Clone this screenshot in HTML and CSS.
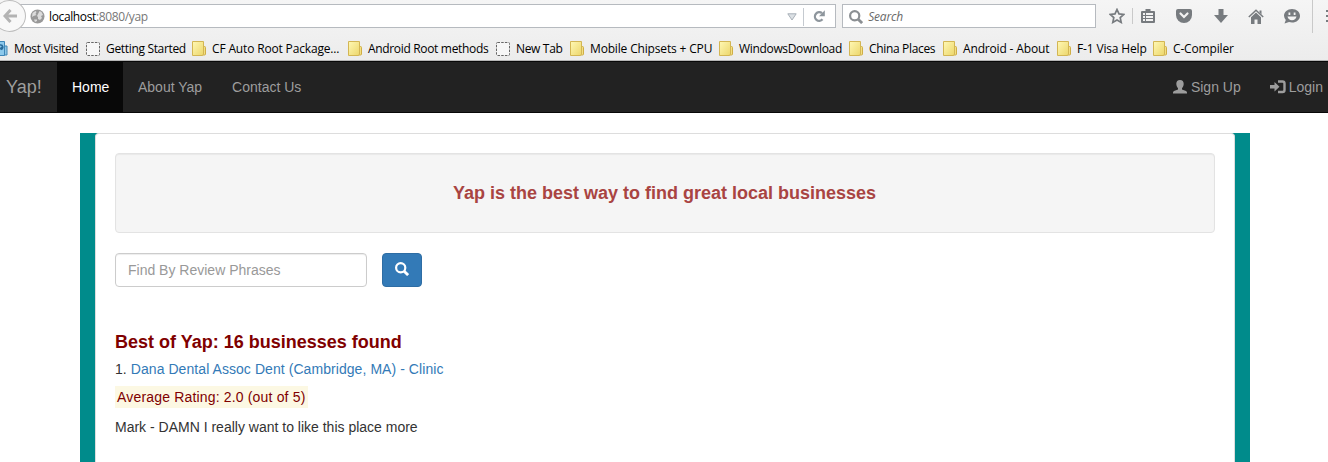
FILE: index.html
```html
<!DOCTYPE html>
<html lang="en">
<head>
<meta charset="utf-8">
<title>Yap</title>
<link rel="stylesheet" href="styles.css">
</head>
<body>
<svg class="defs" width="0" height="0">
  <defs>
    <linearGradient id="fill" x1="0" y1="0" x2="1" y2="1"><stop offset="0" stop-color="#fff8b4"/><stop offset="1" stop-color="#ecd66b"/></linearGradient>
    <symbol id="folder" viewBox="0 0 14 16"><path d="M9 5.500h3.500q1 0 1 1v6.500q0 1-1 1H9z" fill="#f3df83" stroke="#cfae45"/><path d="M.5.500h11v12.500l-1 1.500H.5z" fill="url(#fill)" stroke="#d3b654"/></symbol>
    <symbol id="blank" viewBox="0 0 14 16"><rect x=".5" y="1.500" width="13" height="13" rx="1" fill="#f7f7f7" stroke="#666" stroke-dasharray="2.500 1.200"/></symbol>
    <symbol id="glass" viewBox="0 0 14 14"><circle cx="5.700" cy="5.700" r="4.600" fill="none" stroke="currentColor" stroke-width="2.200"/><path d="M8.900 8.900l4.200 4.200" stroke="currentColor" stroke-width="2.800"/></symbol>
  </defs>
</svg>
<div class="chrome">
  <div class="toolbar">
    <div class="back"><svg width="14" height="14" viewBox="0 0 14 14"><path d="M7.500 1L2 7l5.500 6M2 7h12" fill="none" stroke="#b3b3b3" stroke-width="3"/></svg></div>
    <div class="address">
      <svg class="globe" width="15" height="15" viewBox="0 0 15 15"><circle cx="7.500" cy="7.500" r="7" fill="#999"/><path d="M2.500 4l3-2 1 1-1 2 1 1-3 1-1.500 1zM9.500 2l2 1 1.500 3-2 1 1 2-2 2-2-1 0-2-1-1 1.500-3zM4 10.500h3l0 1.500-2 1z" fill="#dcdcdc"/></svg>
      <span class="url"><b>localhost</b>:8080/yap</span>
      <svg class="drop" width="10" height="8" viewBox="0 0 10 8"><path d="M.8.800h8.400L5 7z" fill="#dce1e5" stroke="#a8b0b8"/></svg>
      <div class="reload"><svg width="13" height="13" viewBox="0 0 13 13"><path d="M9.500 9.300A4.300 4.300 0 1 1 9 3.200" fill="none" stroke="#8e969d" stroke-width="2.300"/><path d="M11.800.300v6H6z" fill="#8e969d"/></svg></div>
    </div>
    <div class="finder"><svg width="14" height="14"><use href="#glass"/></svg><i>Search</i></div>
    <div class="tools">
      <svg width="16" height="16" viewBox="0 0 16 16"><path d="M8 1.500l2 4.400 4.800.500-3.600 3.200 1 4.800L8 12l-4.200 2.400 1-4.800L1.200 6.400 6 5.900z" fill="none" stroke="#777b7f" stroke-width="1.700"/></svg>
      <i class="rule short"></i>
      <svg class="clip" width="14" height="14" viewBox="0 0 14 14"><path d="M4.500 2V0h5v2H13q1 0 1 1v10q0 1-1 1H1q-1 0-1-1V3q0-1 1-1z" fill="#777b7f"/><path d="M2 4h2v2H2zM5 4h7v2H5zM2 7h2v2H2zM5 7h7v2H5zM2 10h2v2H2zM5 10h7v2H5z" fill="#f3f3f3"/></svg>
      <svg class="pocket" width="16" height="14" viewBox="0 0 16 14"><path d="M2 0h12q2 0 2 2v4a8 8 0 0 1-16 0V2q0-2 2-2z" fill="#777b7f"/><path d="M4.500 4.500L8 8l3.500-3.500" fill="none" stroke="#f3f3f3" stroke-width="2.200" stroke-linecap="round"/></svg>
      <svg class="down" width="14" height="14" viewBox="0 0 14 14"><path d="M4.500 0h5v6H14l-7 8-7-8h4.500z" fill="#777b7f"/></svg>
      <svg class="home" width="16" height="15" viewBox="0 0 16 15"><path d="M.8 8L8 1.200 15.200 8" fill="none" stroke="#777b7f" stroke-width="1.500"/><path d="M11.500 1.500h2v4l-2-2zM3 8.200l5-4.700 5 4.700V15H9.500v-4.500h-3V15H3z" fill="#777b7f"/></svg>
      <svg class="chat" width="16" height="15" viewBox="0 0 16 15"><path d="M8 0c4.600 0 8 3 8 6.800s-3.400 6.800-8 6.800c-1 0-2-.200-3-.500L.500 14.500l1.300-3.600A6.500 6.500 0 0 1 0 6.800C0 3 3.400 0 8 0z" fill="#777b7f"/><path d="M4.500 3.500h1.800v2.500H4.500zM9.700 3.500h1.800v2.500H9.700zM3.500 7.500h9q-1 3.800-4.500 3.800T3.500 7.500z" fill="#f3f3f3"/></svg>
      <i class="rule tall"></i>
      <svg class="menu" width="2" height="14" viewBox="0 0 2 14"><path d="M0 1h2v2H0zM0 6h2v2H0zM0 11h2v2H0z" fill="#777b7f"/></svg>
    </div>
  </div>
  <div class="bookmarks">
    <span class="visited"><svg width="15" height="16" viewBox="0 0 15 16"><path d="M10 5h4v9h-4z" fill="#8ec6e6" stroke="#4388b5"/><path d="M.5.500h11v14H.5z" fill="#8cc9ec" stroke="#3e86b8"/><path d="M4 11l5-5M7 4a2.300 2.300 0 1 1 1 4.500" fill="none" stroke="#286b9b" stroke-width="1.500"/></svg>Most Visited</span>
    <span><svg><use href="#blank"/></svg>Getting Started</span>
    <span class="loose"><svg><use href="#folder"/></svg>CF Auto Root Package...</span>
    <span><svg><use href="#folder"/></svg>Android Root methods</span>
    <span><svg><use href="#blank"/></svg>New Tab</span>
    <span class="loose"><svg><use href="#folder"/></svg>Mobile Chipsets + CPU</span>
    <span><svg><use href="#folder"/></svg>WindowsDownload</span>
    <span><svg><use href="#folder"/></svg>China Places</span>
    <span class="loose"><svg><use href="#folder"/></svg>Android - About</span>
    <span class="loose"><svg><use href="#folder"/></svg>F-1 Visa Help</span>
    <span class="loose"><svg><use href="#folder"/></svg>C-Compiler</span>
  </div>
</div>
<nav class="navbar">
  <a class="brand">Yap!</a>
  <a class="active">Home</a>
  <a>About Yap</a>
  <a>Contact Us</a>
  <a class="signup"><svg width="14" height="14" viewBox="0 0 14 14"><path d="M7 0c2.500 0 3.700 1.500 3.700 3.800 0 1.800-.700 3.500-1.700 4.400v1.300l4 1.400Q14 11.500 14 12.500V13.500H0v-1q0-1 1-1.600l4-1.400V8.200C4 7.300 3.300 5.600 3.300 3.800 3.300 1.500 4.500 0 7 0z" fill="#9d9d9d"/></svg>Sign Up</a>
  <a class="login"><svg width="16" height="14" viewBox="0 0 16 14"><path d="M0 5h4.500V2l5 4.800-5 4.800V8.500H0z" fill="#9d9d9d"/><path d="M8 1.500h4.500q2 0 2 2v6.500q0 2-2 2H8" fill="none" stroke="#9d9d9d" stroke-width="2.400"/></svg>Login</a>
</nav>
<main class="container">
  <div class="panel">
    <div class="well">Yap is the best way to find great local businesses</div>
    <form class="search">
      <input type="text" placeholder="Find By Review Phrases">
      <button type="button"><svg width="14" height="14"><use href="#glass"/></svg></button>
    </form>
    <h4>Best of Yap: 16 businesses found</h4>
    <p class="entry">1. <a>Dana Dental Assoc Dent (Cambridge, MA) - Clinic</a></p>
    <p class="rating"><mark>Average Rating: 2.0 (out of 5)</mark></p>
    <p class="review">Mark - DAMN I really want to like this place more</p>
  </div>
</main>
</body>
</html>
```
FILE: styles.css
```css
* { box-sizing: border-box; }
html, body { height: 100%; }
body { margin: 0; overflow: hidden; background: #fff; color: #333; font: 14px/20px "Liberation Sans", Arial, sans-serif; display: flex; flex-direction: column; }
svg { display: block; flex: none; }
.defs { position: absolute; }
.chrome { height: 61px; flex: none; background: linear-gradient(#f5f5f5, #ececec); border-bottom: 1px solid #b5b5b5; font: 12px/16px "Open Sans", "Noto Sans", sans-serif; color: #000; overflow: hidden; }
.toolbar { height: 35px; display: flex; align-items: flex-start; padding-top: 4px; }
.back { z-index: 1; width: 33px; height: 32px; margin: -4px -26px 0 -7px; border: 1px solid #bdbdbd; border-radius: 50%; background: #f8f8f8; display: flex; align-items: center; justify-content: center; padding-left: 2px; }
.address { width: 837px; height: 24px; border: 1px solid #b6babf; background: #fff; display: flex; align-items: center; padding: 1px 0 0 29px; }
.url { margin-left: 4px; color: #777; letter-spacing: -.36px; }
.url b { font-weight: 400; color: #000; }
.drop { margin-left: auto; margin-right: 6px; }
.reload { width: 32px; height: 18px; border-left: 1px solid #c5cad0; display: flex; align-items: center; justify-content: center; }
.finder { width: 254px; height: 24px; margin-left: 6px; border: 1px solid #b6babf; background: #fff; display: flex; align-items: center; gap: 5px; padding: 1px 0 0 6px; color: #8b8f93; }
.finder i { color: #6a6a6a; letter-spacing: -.2px; }
.tools { display: flex; align-items: center; height: 24px; margin-left: 13px; }
.rule { background: #c9c9c9; width: 1px; flex: none; }
.short { height: 16px; margin-left: 7px; }
.tall { height: 33px; margin-left: 12px; }
.clip { margin-left: 8px; }
.pocket { margin-left: 21px; }
.down { margin-left: 22px; }
.home { margin-left: 20px; }
.chat { margin-left: 20px; }
.menu { margin-left: 13px; }
.bookmarks { display: grid; grid-template-columns: 93px 106px 156px 148px 74px 149px 130px 94px 114px 96px 100px; margin-left: -7px; padding-top: 5px; white-space: nowrap; letter-spacing: -.33px; }
.bookmarks span { display: flex; align-items: center; line-height: 17px; }
.bookmarks svg { width: 14px; height: 16px; margin-right: 6px; }
.bookmarks .visited svg { width: 15px; }
.bookmarks .loose { letter-spacing: -.16px; }
.navbar { height: 52px; flex: none; background: #222; border: solid #080808; border-width: 1px 0; display: flex; color: #9d9d9d; }
.navbar a { display: flex; align-items: center; padding: 0 15px; }
.navbar .brand { font-size: 18px; width: 57px; padding: 0 0 0 6px; }
.navbar .active { width: 66px; background: #080808; color: #fff; }
.navbar .signup { margin-left: auto; }
.signup svg { margin-right: 4px; }
.navbar .login { padding-right: 5px; padding-left: 14px; }
.login svg { margin-right: 3px; }
.container { width: 1170px; flex: 1 1 0; min-height: 0; margin: 20px 0 0 80px; padding: 0 15px; background: #008b8b; }
.panel { height: 100%; background: #fff; border: 1px solid #ddd; border-bottom: 0; border-radius: 4px 4px 0 0; padding: 19px 19px 0; }
.well { height: 80px; display: flex; align-items: center; justify-content: center; padding-right: 1px; background: #f5f5f5; border: 1px solid #e3e3e3; border-radius: 4px; box-shadow: inset 0 1px 1px rgba(0,0,0,.05); color: #a94442; font-size: 18px; font-weight: 700; }
.search { display: flex; gap: 15px; margin: 20px 0 45px; }
.search input { width: 252px; height: 34px; padding: 6px 12px; border: 1px solid #ccc; border-radius: 4px; box-shadow: inset 0 1px 1px rgba(0,0,0,.075); font: inherit; }
.search input::placeholder { color: #999; }
.search button { width: 40px; height: 34px; border: 1px solid #2e6da4; border-radius: 4px; background: #337ab7; color: #fff; padding: 0 12px 2px; }
h4 { margin: 0 0 7px; font-size: 18px; line-height: 20px; color: maroon; }
p { margin: 0 0 10px; }
.entry { margin-bottom: 7px; letter-spacing: .065px; }
.entry a { color: #337ab7; }
.rating { display: flex; margin-bottom: 9px; }
.rating mark { background: #fcf8e3; color: maroon; padding: 0 2px; line-height: 22px; letter-spacing: .17px; }
```
